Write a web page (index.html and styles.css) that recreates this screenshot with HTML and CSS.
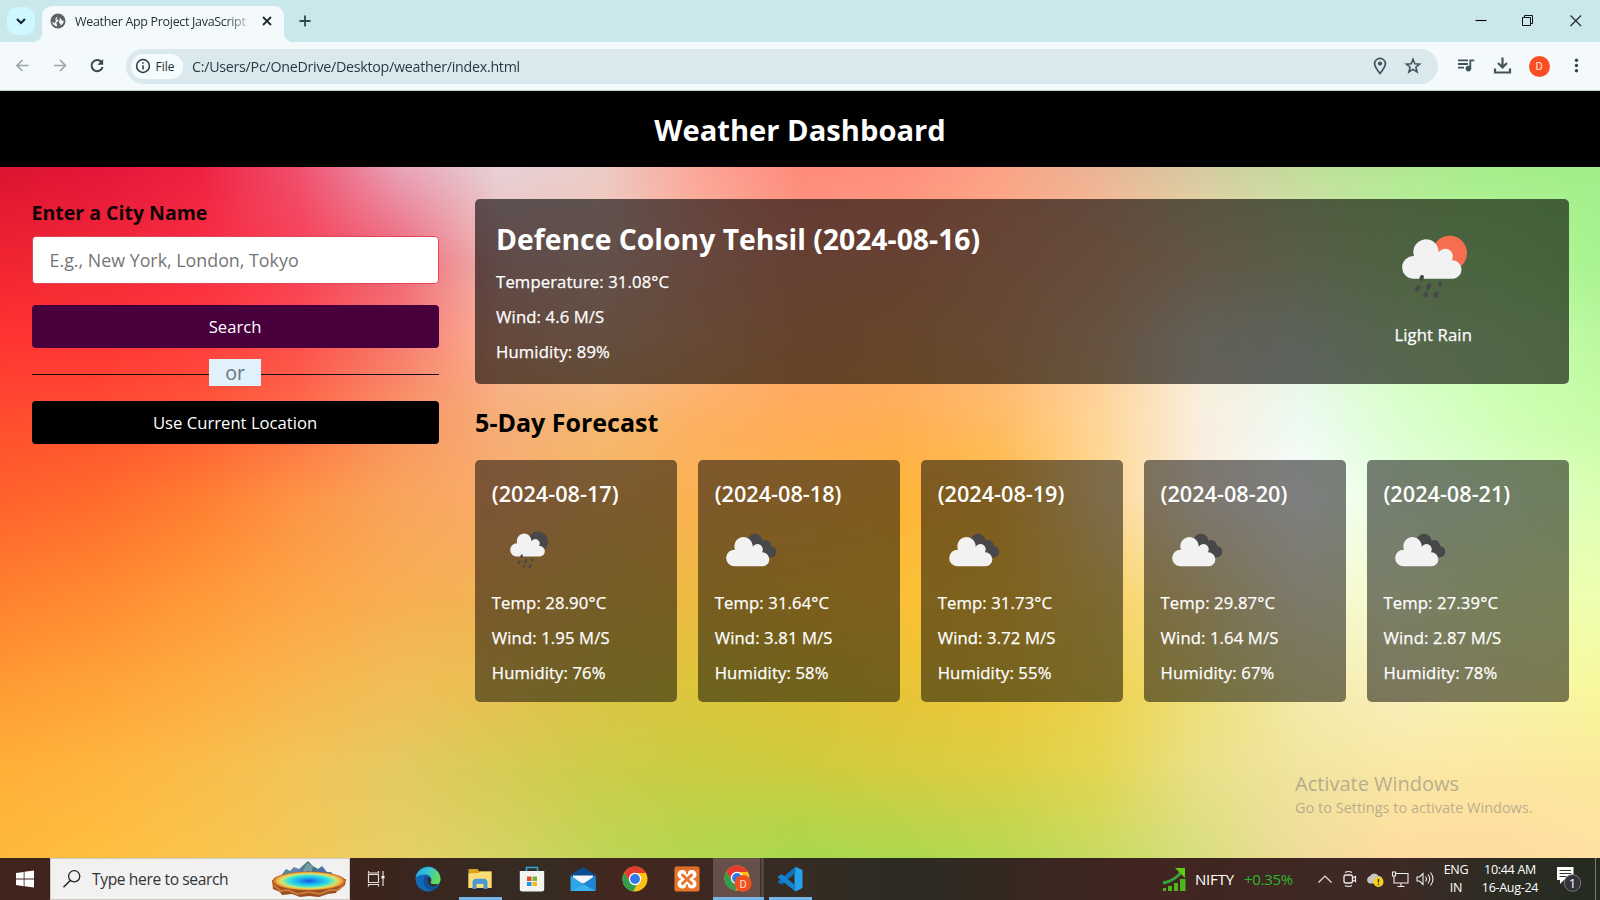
FILE: index.html
```html
<!DOCTYPE html>
<html lang="en">
<head>
<meta charset="utf-8">
<title>Weather App Project JavaScript</title>
<link rel="stylesheet" href="styles.css">
</head>
<body>
<svg class="defs" width="0" height="0" aria-hidden="true">
  <defs>
    <g id="cloud-rain">
      <path fill="#f2f2f2" d="M218 267a34 34 0 1 1 3-68a38 38 0 1 1 74-11a22 22 0 0 1 39 24a27.500 27.500 0 0 1 4 55z"/>
      <path d="M245 262l-2 6M234 292l-4 8M267 286l-4 10M300 281l-2 3M257 313l-2 4M289 311l-4 8" stroke="#48484a" stroke-width="12" stroke-linecap="round"/>
    </g>
    <symbol id="rain-day" viewBox="92 43 375 375"><circle cx="328" cy="190" r="52" fill="#f56e50"/><use href="#cloud-rain"/></symbol>
    <symbol id="rain-night" viewBox="92 43 375 375"><circle cx="328" cy="190" r="52" fill="#48484a"/><use href="#cloud-rain"/></symbol>
    <symbol id="clouds" viewBox="736 190 219 219">
      <g fill="#48484a"><circle cx="856" cy="275" r="23"/><circle cx="886" cy="289" r="18"/><circle cx="903" cy="306" r="17"/><path d="M840 280h50l15 43h-50z"/></g>
      <path fill="#f2f2f2" d="M793 350a25 25 0 1 1 3-50a27.500 27.500 0 1 1 53-9a16 16 0 0 1 28 17a21 21 0 0 1 2 42z"/>
    </symbol>
    <symbol id="chrome" viewBox="0 0 26 26">
      <circle cx="13" cy="13" r="12.500" fill="#fbc117"/>
      <path fill="#e33b2e" d="M2.200 6.800A12.500 12.500 0 0 1 23.900 7H13a6 6 0 0 0-5.300 8.800z"/>
      <path fill="#2f9e4d" d="M2.200 6.700L7.800 16a6 6 0 0 0 7 2.800l-3.700 6.600A12.500 12.500 0 0 1 2.200 6.700z"/>
      <circle cx="13" cy="13" r="6.200" fill="#fff"/><circle cx="13" cy="13" r="4.900" fill="#3478e6"/>
    </symbol>
  </defs>
</svg>
<div class="screen">
  <div class="tabstrip">
    <div class="tab-search"><svg width="28" height="28"><path d="M10 12l4 4 4-4" fill="none" stroke="#17272b" stroke-width="2.200"/></svg></div>
    <div class="tab">
      <svg class="globe" width="16" height="16" viewBox="0 0 16 16"><circle cx="8" cy="8" r="7.500" fill="#5b6165"/><path d="M8.500 2.300c-.2 1.500-1 2.200-2.500 2.200-.2 1.200-1 1.500-1.700 2H8c.8.800.5 2-.5 2.300-1 0-1.200.7-1 1.700.3 1 .7 1.700.5 3C4.300 13 2.300 11 2.200 8.300l2.300 2.200M10 3.200c-.6 1.600.2 2.300 1.300 2.800-.3 1.500 1 1.800 2.500 1.800-.2 2.500-1.400 4-3.300 4.900.7-1.500-.3-2-1.500-2.700" fill="#f1f6f8"/></svg>
      <span class="tab-title">Weather App Project JavaScript</span>
      <svg class="tab-close" width="12" height="12"><path d="M2 2l8 8m0-8l-8 8" stroke="#202a2d" stroke-width="1.800"/></svg>
    </div>
    <svg class="new-tab" width="14" height="14"><path d="M7 1.500v11M1.500 7h11" stroke="#31494e" stroke-width="1.800"/></svg>
    <div class="window-buttons">
      <svg width="47" height="42"><path d="M18.500 20.500h11" stroke="#000" stroke-width="1.100"/></svg>
      <svg width="48" height="42"><path d="M18.500 17.500h8v8h-8zM20.500 17.500v-2h8v8h-2" fill="none" stroke="#111"/></svg>
      <svg width="48" height="42"><path d="M18.500 15.500l10.500 10.500m0-10.500L18.500 26" stroke="#222" stroke-width="1.100"/></svg>
    </div>
  </div>
  <div class="toolbar">
    <div class="nav">
      <svg width="37" height="36"><path d="M24.500 17.500H13.500m5-5.500l-5.500 5.500 5.500 5.500" fill="none" stroke="#9ba3a7" stroke-width="1.600"/></svg>
      <svg width="37" height="36"><path d="M13 17.500h11m-5-5.500l5.500 5.500-5.500 5.500" fill="none" stroke="#9ba3a7" stroke-width="1.600"/></svg>
      <svg width="37" height="36"><path d="M23.500 14A5.600 5.600 0 1 0 24.600 19" fill="none" stroke="#34474c" stroke-width="1.900"/><path d="M25.100 11v5.700h-5.700z" fill="#34474c"/></svg>
    </div>
    <div class="omnibox">
      <div class="chip"><svg width="16" height="16"><circle cx="8" cy="8" r="6.400" fill="none" stroke="#26373b" stroke-width="1.500"/><path d="M8 7.200v4.200M8 4.300v1.500" stroke="#26373b" stroke-width="1.500"/></svg><span>File</span></div>
      <span class="url">C:/Users/Pc/OneDrive/Desktop/weather/index.html</span>
      <div class="omni-actions">
        <svg width="18" height="20"><path d="M9 17.500C5.500 13.200 3.600 10.600 3.600 7.800a5.400 5.400 0 0 1 10.800 0c0 2.800-1.900 5.400-5.400 9.700z" fill="none" stroke="#40545a" stroke-width="1.700"/><circle cx="9" cy="7.600" r="2.100" fill="#40545a"/></svg>
        <svg width="18" height="20"><path d="M9 3.200l1.800 4.500 4.800.4-3.700 3.100 1.200 4.800L9 13.400 4.900 16l1.200-4.800L2.400 8.100l4.800-.4z" fill="none" stroke="#40545a" stroke-width="1.600"/></svg>
      </div>
    </div>
    <div class="tools">
      <svg width="37" height="36"><path d="M11 12.300h10M11 16h10M11 19.700h6M23.300 20.500v-8.200h4" fill="none" stroke="#40545a" stroke-width="1.800"/><circle cx="21.400" cy="20.600" r="2.800" fill="#40545a"/></svg>
      <svg width="37" height="36"><path d="M18.500 9.500v10m-4.500-4.500l4.500 4.500 4.500-4.500M11 20.500v4h15v-4" fill="none" stroke="#40545a" stroke-width="2.200"/></svg>
      <span class="avatar">D</span>
      <svg width="37" height="36"><g fill="#34474c"><circle cx="18.500" cy="12.200" r="1.700"/><circle cx="18.500" cy="17.500" r="1.700"/><circle cx="18.500" cy="22.800" r="1.700"/></g></svg>
    </div>
  </div>

  <header class="page-header"><h1>Weather Dashboard</h1></header>
  <div class="page">
    <div class="mesh"><i class="m1"></i><i class="m2"></i><i class="m3"></i><i class="m4"></i><i class="m5"></i><i class="m6"></i><i class="m7"></i><i class="m8"></i><i class="m9"></i></div>
    <section class="weather-input">
      <h3>Enter a City Name</h3>
      <input class="city-input" type="text" placeholder="E.g., New York, London, Tokyo">
      <button class="btn search-btn">Search</button>
      <div class="separator"><span>or</span></div>
      <button class="btn location-btn">Use Current Location</button>
    </section>
    <section class="weather-data">
      <div class="current">
        <div class="details">
          <h2>Defence Colony Tehsil (2024-08-16)</h2>
          <p>Temperature: 31.08°C</p><p>Wind: 4.6 M/S</p><p>Humidity: 89%</p>
        </div>
        <div class="condition"><svg width="125" height="125"><use href="#rain-day"/></svg><p>Light Rain</p></div>
      </div>
      <h2 class="forecast-title">5-Day Forecast</h2>
      <div class="cards">
        <div class="card"><h3>(2024-08-17)</h3><svg width="73" height="73"><use href="#rain-night"/></svg><p>Temp: 28.90°C</p><p>Wind: 1.95 M/S</p><p>Humidity: 76%</p></div>
        <div class="card"><h3>(2024-08-18)</h3><svg width="73" height="73"><use href="#clouds"/></svg><p>Temp: 31.64°C</p><p>Wind: 3.81 M/S</p><p>Humidity: 58%</p></div>
        <div class="card"><h3>(2024-08-19)</h3><svg width="73" height="73"><use href="#clouds"/></svg><p>Temp: 31.73°C</p><p>Wind: 3.72 M/S</p><p>Humidity: 55%</p></div>
        <div class="card"><h3>(2024-08-20)</h3><svg width="73" height="73"><use href="#clouds"/></svg><p>Temp: 29.87°C</p><p>Wind: 1.64 M/S</p><p>Humidity: 67%</p></div>
        <div class="card"><h3>(2024-08-21)</h3><svg width="73" height="73"><use href="#clouds"/></svg><p>Temp: 27.39°C</p><p>Wind: 2.87 M/S</p><p>Humidity: 78%</p></div>
      </div>
    </section>
    <div class="watermark"><div class="wm-title">Activate Windows</div><div class="wm-sub">Go to Settings to activate Windows.</div></div>
  </div>

  <div class="taskbar">
    <div class="start"><svg width="18" height="18"><path d="M0 3l7.700-1.100v6.700H0zM8.500 1.800L18 .4v8.200H8.500zM0 9.400h7.700v6.800L0 15.100zM8.500 9.400H18v8.200l-9.500-1.300z" fill="#fff"/></svg></div>
    <div class="search">
      <svg width="20" height="20"><circle cx="12.200" cy="7.300" r="5.600" fill="none" stroke="#222" stroke-width="1.300"/><path d="M8.200 11.500L1.500 18.200" stroke="#222" stroke-width="1.500"/></svg>
      <span class="search-text">Type here to search</span>
      <svg class="spring" width="76" height="38" viewBox="0 0 76 38">
        <defs><radialGradient id="pool"><stop offset="0" stop-color="#1a4fe0"/><stop offset=".25" stop-color="#1aa0f0"/><stop offset=".55" stop-color="#2fe0e0"/><stop offset=".75" stop-color="#c8e878"/><stop offset=".88" stop-color="#f8b040"/><stop offset="1" stop-color="#b85a20"/></radialGradient>
        <linearGradient id="peaks"><stop offset="0" stop-color="#3f8f86"/><stop offset=".3" stop-color="#6e7fb4"/><stop offset=".5" stop-color="#42766e"/><stop offset=".75" stop-color="#4f6eae"/><stop offset="1" stop-color="#4a9a7c"/></linearGradient></defs>
        <path d="M9 17l6-8 4 2 4-4 5 2 9-8 5 5 5 3 4-3 5 6 4 0 6 7z" fill="url(#peaks)"/>
        <path d="M36 3l-6 12 7-4 3 4 2-9z" fill="#95b7c8" opacity=".6"/>
        <path d="M1 20l1 9 7 3 2 3 10-1 8 3 9-1 10 1 9-3 8-1 2-4 7-4 1-6z" fill="#9a4d20"/>
        <path d="M2 25l8 6 7-1 9 4 12-2 11 2 10-4 8 0 6-5" fill="none" stroke="#c97a38" stroke-width="2"/>
        <ellipse cx="38" cy="21" rx="36.500" ry="9.500" fill="url(#pool)"/>
      </svg>
    </div>
    <div class="app taskview"><svg width="20" height="20"><path d="M2.500 5.500h10v8h-10zM2.500 2v2h10V2M2.500 17.500v-2h10v2M17 2v5M17 9.500V17" fill="none" stroke="#e4dedc" stroke-width="1.200"/><path d="M15.500 7h3v2.500h-3z" fill="#fff"/></svg></div>
    <div class="app"><svg width="26" height="26">
      <defs><linearGradient id="edge" x1="0" y1="0" x2="1" y2=".3"><stop offset="0" stop-color="#2a9fe0"/><stop offset=".5" stop-color="#35c3d4"/><stop offset="1" stop-color="#66dc5c"/></linearGradient></defs>
      <circle cx="13" cy="13" r="12.500" fill="#1269b8"/><path d="M.6 12A12.500 12.500 0 0 1 25.500 13c0 4-2.500 6-6 6-3.500 0-5-1-4-2.500C18 13 15 8.500 10.500 8.500 5.500 8.500 2 10 .6 12z" fill="url(#edge)"/><path d="M11.500 9C7 12 7 20 14 23.500c3 1 7 0 9-3-5 2-11-.5-11-5 0-2 1-3 2-4" fill="#124e95"/><path d="M15.500 16.500c1-1.500 1-4-1-5.500-3 2-3 6 .5 8.500 3 1.500 6 1 8.500-.5l-2-1c-3 .5-6 0-6-1.500z" fill="#302d26"/></svg></div>
    <div class="app running"><svg width="26" height="26"><path d="M1.500 3h9l2 2.500h12V22h-23z" fill="#d9a321"/><path d="M1.500 7.500l10-.5 2-1.500h11V22h-23z" fill="#fbdc77"/><path d="M5.500 23v-8l2-2.200h11l2 2.200v8h-4v-5h-7v5z" fill="#4b98d5"/></svg></div>
    <div class="app"><svg width="26" height="26"><path d="M7.500 6V1.500h11V6" fill="none" stroke="#36a7df" stroke-width="1.500"/><path d="M.8 5h24.400v18q0 2.500-2.500 2.500H3.300Q.8 25.500.8 23z" fill="#f3f3f2"/><path fill="#e44b2c" d="M8 10.500h4.500V15H8z"/><path fill="#79b629" d="M13.500 10.500H18V15h-4.500z"/><path fill="#1799df" d="M8 16h4.500v4H8z"/><path fill="#fbb90e" d="M13.500 16H18v4h-4.500z"/></svg></div>
    <div class="app"><svg width="26" height="26"><path d="M.5 9L13 1l12.500 8-1 3H1z" fill="#0b4c92"/><path d="M3 9.500h20v8H3z" fill="#f4f7fa"/><path d="M.5 9.500L13 18l12.500-8.500V25H.5z" fill="#2fa4e7"/><path d="M.5 25L17 15.500l8.500-6V25z" fill="#1c86d5"/><path d="M.5 25L13 18l12.500 7z" fill="#37b1ef"/></svg></div>
    <div class="app"><svg width="26" height="26"><use href="#chrome"/></svg></div>
    <div class="app"><svg width="26" height="26"><rect x=".5" y=".5" width="25" height="25" rx="2" fill="#e9752a"/><path d="M1 2.500h24" stroke="#cf6420"/><path d="M8 8.500q5 4.500 10 0M8 18q5-4.500 10 0M8.300 8.500q3 4.700 0 9.500M17.700 8.500q-3 4.700 0 9.500" fill="none" stroke="#fff" stroke-width="9" stroke-linecap="round" stroke-linejoin="round"/><path d="M8.500 9l9 8.500m0-8.500l-9 8.500" stroke="#e9752a" stroke-width="3" stroke-linecap="round"/><path d="M13 4v4M13 18.500v4M3 13.300h3.500M19.500 13.300H23" stroke="#e9752a" stroke-width="2"/></svg></div>
    <div class="app active"><svg width="28" height="28"><use href="#chrome" width="26" height="26"/><circle cx="19" cy="18.500" r="8.500" fill="#f0501f"/><text x="19" y="22.500" text-anchor="middle" class="badge-letter">D</text></svg></div>
    <div class="app running vscode"><svg width="26" height="26"><path d="M18.500.7L25.500 4v18l-7 3.500-1-3V4z" fill="#26a2ec"/><path d="M18.500.7v6L5 18.500 1 16.700v-1.500z" fill="#0d74bd"/><path d="M1 10.500L4.500 8l14 11.500v6L1 11.800z" fill="#1484cf"/></svg></div>
    <div class="tray">
      <div class="stocks"><svg width="24" height="26"><g fill="#4fb51d"><rect x="1" y="22" width="3" height="3"/><rect x="6" y="20" width="4" height="5"/><rect x="12" y="17" width="4" height="8"/><rect x="18" y="13" width="5.500" height="12"/></g><path d="M1 17Q13 15 20 5" fill="none" stroke="#35a63a" stroke-width="3"/><path d="M13 2h10v10z" fill="#63c914"/></svg><span class="nifty">NIFTY</span><span class="gain">+0.35%</span></div>
      <svg class="up" width="16" height="20"><path d="M1.500 13.500L8 7l6.500 6.500" fill="none" stroke="#e8e4e2" stroke-width="1.200"/></svg>
      <div class="tray-icons">
        <svg width="20" height="20"><rect x="4" y="6" width="8.500" height="8" rx="2" fill="none" stroke="#eee" stroke-width="1.300"/><path d="M12.500 9l3-1.500v5l-3-1.500M5 3.500q3.500-2 7 0M5 16.500q3.500 2 7 0" fill="none" stroke="#eee" stroke-width="1.200"/></svg>
        <svg width="20" height="20"><path d="M5 14.500a3.700 3.700 0 0 1 0-7.200A4.700 4.700 0 0 1 13.500 7a4 4 0 0 1 2 7.500z" fill="#c9c7c5"/><circle cx="13.500" cy="13" r="5" fill="#f6d21b"/><path d="M13.500 10v3.500M13.500 14.800v1.300" stroke="#222" stroke-width="1.300"/></svg>
        <svg width="20" height="20"><path d="M5.500 4.500h12.500v9.500H4v-5M11 14v3M7.500 17.500h7M2.500 3h3v4h-3zM4 7v7" fill="none" stroke="#eee" stroke-width="1.100"/></svg>
        <svg width="20" height="20"><path d="M2 8h2.500L8 4.500v11L4.500 12H2zM10.500 7.500q2 2.500 0 5M13 5.500q3.500 4.500 0 9M15.500 3.500q5 6.500 0 13" fill="none" stroke="#eee" stroke-width="1.100"/></svg>
      </div>
      <div class="stack lang"><span>ENG</span><span>IN</span></div>
      <div class="stack clock"><span>10:44 AM</span><span>16-Aug-24</span></div>
      <svg class="notice" width="30" height="34"><path d="M4 5h16.500v13H11l-4 4v-4H4z" fill="#fff"/><path d="M6.500 8.500H18M6.500 11.500H18M6.500 14.500h7" stroke="#34312a" stroke-width="1.200"/><circle cx="19.500" cy="21" r="8.300" fill="#33343a" stroke="#777"/><text x="19.500" y="25.500" text-anchor="middle" class="count">1</text></svg>
    </div>
  </div>
</div>
</body>
</html>
```

FILE: styles.css
```css
* { box-sizing: border-box; margin: 0; padding: 0; }
body { font-family: "Open Sans", "Noto Sans", sans-serif; background: #000; overflow: hidden; }
svg { display: block; flex: none; }
.defs { position: absolute; }
.screen { width: 1600px; height: 900px; display: flex; flex-direction: column; }

/* Browser frame */
.tabstrip { height: 42px; flex: none; display: flex; background: #cae7eb; }
.tab-search { width: 28px; height: 28px; margin: 7px 7px 0 7px; border-radius: 10px; background: #cdf8ff; }
.tab { width: 242px; height: 36px; margin-top: 6px; padding: 0 11px 0 8px; display: flex; align-items: center; background: #f4f9fc; border-radius: 10px 10px 0 0; position: relative; }
.tab::before, .tab::after { content: ""; position: absolute; bottom: 0; width: 10px; height: 10px; }
.tab::before { left: -10px; background: radial-gradient(circle at 0 0, transparent 10px, #f4f9fc 10.500px); }
.tab::after { right: -10px; background: radial-gradient(circle at 100% 0, transparent 10px, #f4f9fc 10.500px); }
.globe, .tab-title, .tab-close { margin-bottom: 6px; }
.globe { flex: none; }
.tab-title { width: 174px; margin-left: 9px; font-size: 12.500px; letter-spacing: -.32px; color: #263236; white-space: nowrap; overflow: hidden; -webkit-mask-image: linear-gradient(90deg, #000 150px, transparent 180px); mask-image: linear-gradient(90deg, #000 150px, transparent 180px); }
.tab-close { margin-left: auto; }
.new-tab { margin: 14px 0 0 14px; }
.window-buttons { margin-left: auto; display: flex; }
.toolbar { height: 49px; flex: none; display: flex; align-items: center; padding: 0 4px 0 4px; background: #f4f9fc; border-bottom: 1px solid #c5cfd1; }
.nav { display: flex; width: 121.500px; }
.omnibox { width: 1312px; height: 35px; border-radius: 18px; background: #d9e9ee; padding: 0 16px 0 5px; display: flex; align-items: center; }
.chip { width: 52px; height: 25px; flex: none; border-radius: 13px; background: #f6fbfd; display: flex; align-items: center; padding-left: 4px; gap: 5px; font-size: 12px; color: #1c2b2f; font-weight: 500; }
.url { margin-left: 9px; font-size: 15px; letter-spacing: -.28px; color: #263b40; white-space: nowrap; transform: scaleX(.95); transform-origin: 0 50%; }
.omni-actions { margin-left: auto; display: flex; gap: 15px; }
.tools { margin-left: 9px; display: flex; align-items: center; }
.avatar { width: 21px; height: 21px; margin: 0 8px; border-radius: 50%; background: #fb4e24; color: #ffe4da; font: 11px/21px Roboto, sans-serif; text-align: center; }

/* Weather page */
.page-header { height: 76px; flex: none; background: #000; text-align: center; }
.page-header h1 { color: #fff; font-size: 29.170px; line-height: 40px; padding-top: 19px; }
.page { height: 691px; flex: none; position: relative; display: flex; gap: 36.500px; padding: 32px 31.250px 32px 31.600px; }
.weather-input, .weather-data { position: relative; }
.mesh, .mesh i { position: absolute; inset: 0; }
.m1 { background: linear-gradient(90deg, #dc1430, #e4173a, #ee2242, #f05270, #e9a4b8, #e8d2d8, #ebccc6, #fba698, #ff8a7c, #ff8f80, #fba287, #eab596, #d5cba0, #c2dc9c, #b2e892, #a5ee8a, #a3ee8a); }
.m2 { background: linear-gradient(90deg, #f02431, #f22838, #f82e40, #f83f56, #ee6478, #eebab4, #f5cabb, #ffb29b, #ffa082, #ffa27d, #ffaf87, #ffbe96, #f5d7ac, #dcebb2, #c0f7a5, #b4fa9b, #a8f290); -webkit-mask-image: linear-gradient(transparent 0, #000 93px); mask-image: linear-gradient(transparent 0, #000 93px); }
.m3 { background: linear-gradient(90deg, #ff3532, #fe3536, #ff3c3e, #fd4e4c, #f77a70, #fcb596, #fbc3a0, #ffb687, #ffa76e, #ffad6a, #ffb982, #ffcda0, #f5eed8, #e6f5e1, #d4ffbe, #c8ffb2, #bcf8a0); -webkit-mask-image: linear-gradient(transparent 93px, #000 173px); mask-image: linear-gradient(transparent 93px, #000 173px); }
.m4 { background: linear-gradient(90deg, #ff4d2f, #ff512f, #ff5c35, #fe7048, #f99562, #f5ae78, #f6b874, #fcb162, #ffac57, #ffaf55, #ffbc66, #ffd698, #f9efdf, #edfaf2, #dcffd0, #d0ffb6, #c8fca8); -webkit-mask-image: linear-gradient(transparent 173px, #000 253px); mask-image: linear-gradient(transparent 173px, #000 253px); }
.m5 { background: linear-gradient(90deg, #ff622c, #ff6c2c, #ff7e32, #fd9545, #f8a55c, #faac6c, #f6b660, #fbb151, #ffb44c, #ffb53a, #ffbc40, #fed790, #faeede, #fcfeff, #e6ffde, #e0ffce, #dcffb4); -webkit-mask-image: linear-gradient(transparent 253px, #000 333px); mask-image: linear-gradient(transparent 253px, #000 333px); }
.m6 { background: linear-gradient(90deg, #ff8230, #ff8c33, #ff9a3a, #fda648, #f8af52, #f2b455, #e9bb50, #eebb40, #f7bd38, #fbc036, #fcc43c, #f9d262, #f9e29a, #faf3d4, #f4ffcc, #eeffb4, #efffb0); -webkit-mask-image: linear-gradient(transparent 333px, #000 433px); mask-image: linear-gradient(transparent 333px, #000 433px); }
.m7 { background: linear-gradient(90deg, #ff9c34, #ffa439, #fdae42, #f8b750, #f0bf58, #e8c152, #ddc446, #dcc63c, #e0c438, #e8c437, #eec83a, #f0d14e, #efe07a, #f4ebaa, #f8f0bc, #f8f5ac, #f8f89c); -webkit-mask-image: linear-gradient(transparent 433px, #000 523px); mask-image: linear-gradient(transparent 433px, #000 523px); }
.m8 { background: linear-gradient(90deg, #ffb038, #feb63f, #fabd4a, #f2c55a, #e4ca60, #d6cc56, #cccd4a, #c9cd42, #cccc3e, #d6cc40, #dccf44, #e3d652, #e9e088, #f1e59f, #fae8a5, #fce8a2, #fbe99a); -webkit-mask-image: linear-gradient(transparent 523px, #000 603px); mask-image: linear-gradient(transparent 523px, #000 603px); }
.m9 { background: linear-gradient(90deg, #fdb93c, #ffbf40, #fbc44c, #f2c95a, #e6d066, #d5d462, #bfd557, #b2d650, #a9d850, #acd84f, #b8d854, #c8db62, #d8de80, #efdc9a, #ffdc9e, #ffdba0, #ffe0a4); -webkit-mask-image: linear-gradient(transparent 603px, #000 691px); mask-image: linear-gradient(transparent 603px, #000 691px); }

.weather-input { width: 407px; flex: none; }
.weather-input h3 { font-size: 19.500px; line-height: 27px; color: #100306; }
.city-input { display: block; width: 100%; height: 48px; margin: 10px 0 21px; padding: 0 17px; border: 1px solid #e8455a; border-radius: 4px; background: #fff; font: 17.830px "Open Sans", sans-serif; }
.city-input::placeholder { color: #757575; }
.btn { display: block; width: 100%; height: 43px; border: 0; border-radius: 4px; color: #fff; font: 16.670px "Open Sans", sans-serif; }
.search-btn { background: #48003c; }
.location-btn { background: #000; }
.separator { height: 53px; display: flex; align-items: flex-start; justify-content: center; padding-top: 11px; background: linear-gradient(#1b0c10, #1b0c10) 0 26px / 100% 1px no-repeat; }
.separator span { width: 52px; height: 27px; background: #e0f1fb; color: #6c757d; font-size: 19.670px; line-height: 27px; text-align: center; }

.weather-data { flex: 1; color: #fff; }
.weather-data p { font-size: 16.670px; line-height: 23px; margin-top: 12px; letter-spacing: .12px; -webkit-text-stroke: .25px #fff; }
.current { height: 185px; padding: 20px 73px 0 21px; border-radius: 5px; background: rgba(0, 0, 0, .6); display: flex; justify-content: space-between; }
.current h2 { font-size: 28.330px; line-height: 40px; }
.current .details p:nth-child(2) { margin-top: 11px; }
.condition { width: 125px; text-align: center; margin-top: -15px; }
.weather-data .condition p { margin-top: -6px; }
.forecast-title { color: #000; font-size: 25px; line-height: 34px; margin: 21px 0 21px; }
.cards { display: grid; grid-template-columns: repeat(5, 1fr); gap: 21px; }
.card { height: 242px; padding: 19px 16.700px; border-radius: 5px; background: rgba(0, 0, 0, .5); }
.card h3 { font-size: 21.670px; line-height: 30px; font-weight: 600; }
.card svg { margin: 4px 0 0 .6px; }
.weather-data .card svg + p { margin-top: 12px; }
.card svg { margin-bottom: -7px; }
.watermark { position: absolute; left: 1295px; top: 603px; color: rgba(125, 125, 125, .55); white-space: nowrap; }
.wm-title { font-size: 20px; line-height: 28px; }
.wm-sub { font-size: 14.500px; line-height: 20px; }

/* Desktop taskbar */
.taskbar { height: 42px; display: flex; background: linear-gradient(90deg, #40231d 0, #3b251d 380px, #352c23 540px, #43261f 620px, #362c23 800px, #2b2b22 900px, #41241f 1130px, #3d2a25 1400px, #292c23 1520px, #252a20 1600px); color: #fff; }
.start { width: 50px; display: grid; place-items: center; }
.search { width: 300px; background: #f1f1f1; border: 1px solid #cfcac8; display: flex; align-items: center; padding-left: 11px; }
.search-text { margin-left: 10px; font-size: 15.600px; letter-spacing: -.38px; color: #333; width: 179px; white-space: nowrap; }
.app { width: 51.700px; flex: none; display: grid; place-items: center; position: relative; }
.taskview { padding-right: 1px; width: 52.500px; }
.running::after, .active::after { content: ""; position: absolute; left: 5px; right: 4px; bottom: 0; height: 3px; background: #76b5e8; }
.active { background: linear-gradient(90deg, #665049 47px, #3d332c 47px, #3d332c 48px, #514740 48px); }
.active::after { left: 0; right: 0; }
.badge-letter { fill: #ffd9cc; font: 11px Roboto, sans-serif; }
.tray { margin-left: auto; display: flex; align-items: center; border-right: 1px solid #777b72; margin-right: 4px; }
.stocks { width: 156px; display: flex; align-items: center; font-size: 15px; white-space: nowrap; }
.nifty { width: 49px; margin-left: 9px; letter-spacing: -.2px; }
.gain { color: #2fb52c; letter-spacing: -.3px; }
.up { margin-left: -1px; }
.tray-icons { display: flex; gap: 5px; margin: 0 1px 0 7px; }
.stack { display: flex; flex-direction: column; align-items: center; font-size: 12.500px; line-height: 18.500px; letter-spacing: -.3px; white-space: nowrap; }
.lang { width: 40px; }
.clock { width: 68px; }
.notice { margin-left: 9px; margin-right: 12px; }
.count { fill: #fff; font: 13px "Open Sans", sans-serif; }
```
